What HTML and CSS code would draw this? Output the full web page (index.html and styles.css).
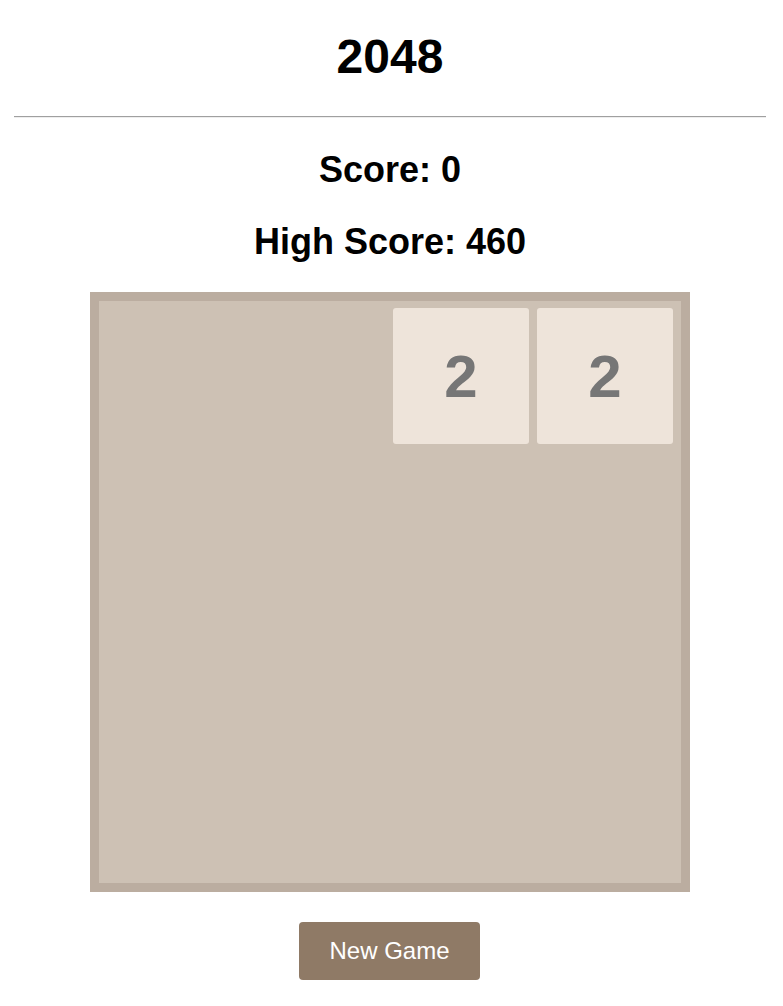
FILE: index.html
```html
<!DOCTYPE html>
<html>
<head>
<meta charset="utf-8">
<title>2048</title>
<link rel="stylesheet" href="styles.css">
</head>
<body>
<div class="page">
  <h1 class="title">2048</h1>
  <hr class="rule">
  <h2 class="score">Score: 0</h2>
  <h2 class="score high">High Score: 460</h2>
  <div class="board">
    <div class="cell"></div>
    <div class="cell"></div>
    <div class="cell tile">2</div>
    <div class="cell tile">2</div>
    <div class="cell"></div><div class="cell"></div><div class="cell"></div><div class="cell"></div>
    <div class="cell"></div><div class="cell"></div><div class="cell"></div><div class="cell"></div>
    <div class="cell"></div><div class="cell"></div><div class="cell"></div><div class="cell"></div>
  </div>
  <div class="actions">
    <button class="new-game">New Game</button>
  </div>
</div>
</body>
</html>
```
FILE: styles.css
```css
html, body {
  margin: 0;
  padding: 0;
  background: #ffffff;
}
body {
  font-family: "Liberation Sans", Arial, sans-serif;
  color: #000;
}
.page {
  width: 780px;
  display: flex;
  flex-direction: column;
  align-items: center;
}
.title {
  margin: 29px 0 0;
  font-size: 48px;
  line-height: 56px;
  font-weight: bold;
  text-align: center;
}
.rule {
  align-self: stretch;
  margin: 31px 14px 0;
  height: 0;
  border: none;
  border-top: 1px solid #a0a0a0;
  border-bottom: 1px solid #eeeeee;
}
.score {
  margin: 31px 0 0;
  font-size: 36px;
  line-height: 42px;
  font-weight: bold;
  text-align: center;
}
.score.high {
  margin-top: 30px;
}
.board {
  margin-top: 29px;
  box-sizing: border-box;
  width: 600px;
  height: 600px;
  border: 9px solid #bbada0;
  background: #cdc1b4;
  padding: 7px 8px 7px 6px;
  display: grid;
  grid-template-columns: repeat(4, 1fr);
  grid-template-rows: repeat(4, 1fr);
  gap: 8px;
}
.cell {
  border-radius: 3px;
}
.tile {
  background: #eee4da;
  color: #767676;
  font-size: 60px;
  font-weight: bold;
  display: flex;
  align-items: center;
  justify-content: center;
}
.actions {
  margin-top: 30px;
  margin-right: 1px;
}
.new-game {
  width: 181px;
  height: 58px;
  border: none;
  border-radius: 4px;
  background: #8f7a66;
  color: #ffffff;
  font-family: "Liberation Sans", Arial, sans-serif;
  font-size: 24px;
  padding: 0;
}
```
